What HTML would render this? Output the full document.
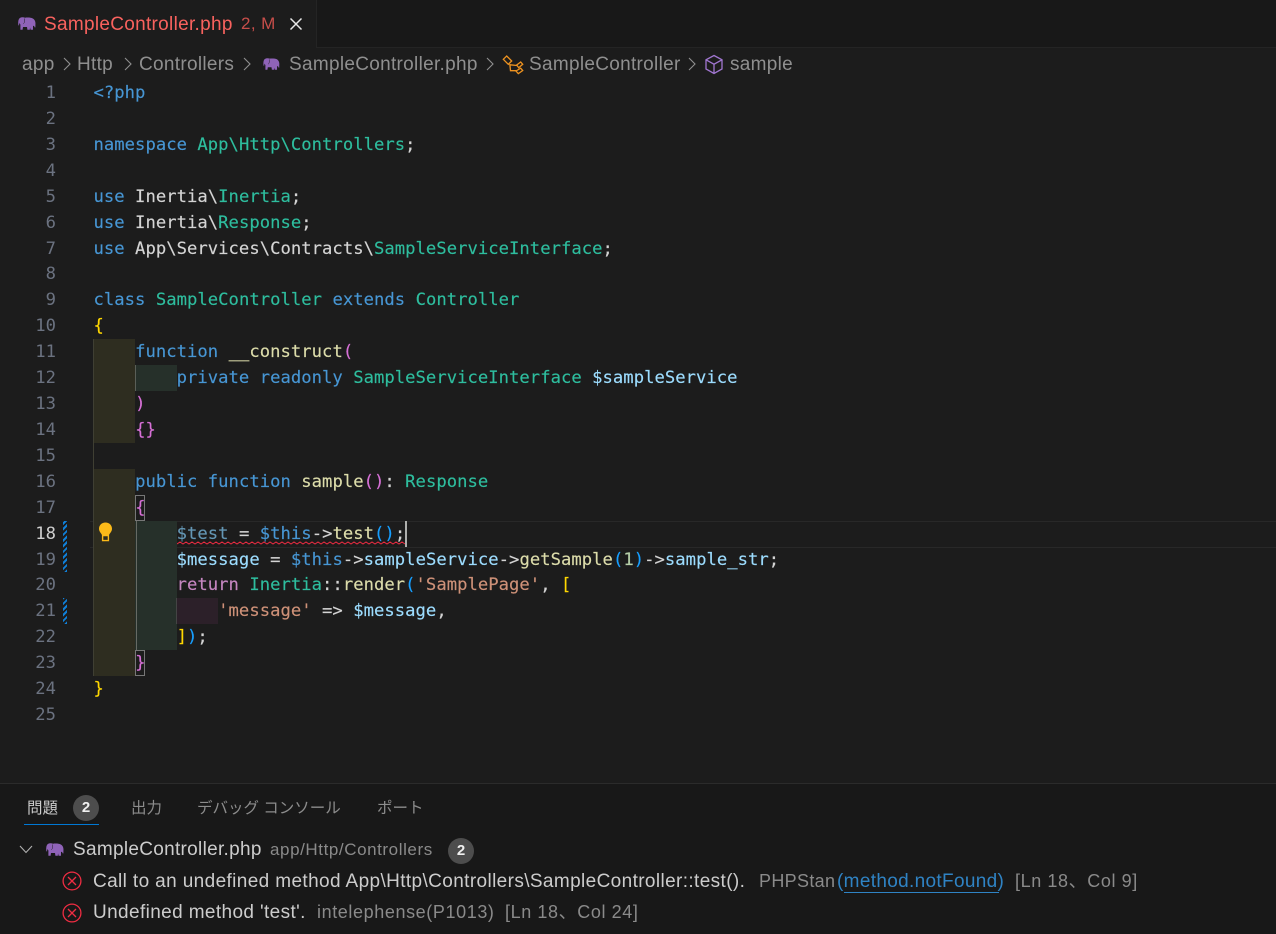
<!DOCTYPE html>
<html><head><meta charset="utf-8">
<style>
html,body{margin:0;padding:0;background:#1c1c1c;}
#r{position:relative;width:1276px;height:934px;overflow:hidden;background:#1c1c1c;font-family:"Liberation Sans","Noto Sans CJK JP",sans-serif;}
.a{position:absolute;}
.t{position:absolute;white-space:pre;line-height:24px;height:24px;}
.s{font-size:19px;letter-spacing:.3px;}
.l{position:absolute;left:93.5px;margin-top:1px;white-space:pre;font-family:"DejaVu Sans Mono",monospace;font-size:17.2px;letter-spacing:.04px;line-height:26px;height:26px;color:#d4d4d4;-webkit-text-stroke:.15px currentColor;}
.n{position:absolute;left:20px;margin-top:1px;width:36px;text-align:right;font-family:"DejaVu Sans Mono",monospace;font-size:17.2px;line-height:26px;color:#6b7280;}
.k{color:#4796d4}.c{color:#2ebd9e}.f{color:#dcdcaa}.v{color:#9cdcfe}.q{color:#ce9178}.p{color:#c586c0}.m{color:#d670d6}.y{color:#ffd700}.b{color:#179fff}
.g{color:#8f8f8f}.w{color:#cccccc}
.j{font-size:15.5px;color:#8c8c8c}
.u{font-size:18px;letter-spacing:.6px;color:#8a8a8a}
</style></head><body>
<div id="r">
<svg width="0" height="0" style="position:absolute"><defs>
<symbol id="e" viewBox="0 0 18 13"><g transform="translate(18,0) scale(-1,1)"><path fill="#8f63b8" d="M0.6 8C0 4 2 1 5.5 0.7C7.5 0.4 9.5 0.5 11 0.7C12.5 0 15 0 16.4 1.2C17.8 2.4 18 5.5 17.6 8.4L16.9 8.4L16.8 5.8C16.5 6.6 16.1 7.2 15.6 7.4L15.6 12.7L13.4 12.7L13 10L9 10L8.6 12.7L6.2 12.7L6 10.4L5.4 12.7L3 12.7L3 8.8C2.2 9 1.5 9.2 1.3 10.4L0.6 10.4Z"/><path fill="none" stroke="#1c1c1c" stroke-width=".5" d="M11.5 1.5C11 3.5 11.3 5.5 12.6 6.8"/></g></symbol>
</defs></svg>

<!-- tab bar -->
<div class="a" style="left:0;top:0;width:1276px;height:48px;background:#181818"></div>
<div class="a" style="left:0;top:0;width:316px;height:48px;background:#1c1c1c"></div>
<div class="a" style="left:316px;top:47px;width:960px;height:1px;background:#242424"></div>
<div class="a" style="left:316px;top:0;width:1px;height:48px;background:#242424"></div>
<svg class="a" style="left:18px;top:17px" width="18" height="13"><use href="#e"/></svg>
<div class="t s" style="left:44px;top:13px;color:#f8625e">SampleController.php</div>
<div class="t" style="left:241px;top:12px;font-size:17px;letter-spacing:.4px;color:#c74e4a">2, M</div>
<svg class="a" style="left:289px;top:17px" width="14" height="14" viewBox="0 0 14 14"><path d="M1.5 1.5L12.5 12.5M12.5 1.5L1.5 12.5" stroke="#e8e8e8" stroke-width="1.5" fill="none"/></svg>

<!-- breadcrumbs -->
<div class="t s g" style="left:22px;top:53px">app</div>
<svg class="a" style="left:63px;top:57px" width="8" height="14" viewBox="0 0 8 14"><path d="M1 1L7 7L1 13" stroke="#8f8f8f" stroke-width="1.1" fill="none"/></svg>
<div class="t s g" style="left:77px;top:53px">Http</div>
<svg class="a" style="left:124px;top:57px" width="8" height="14" viewBox="0 0 8 14"><path d="M1 1L7 7L1 13" stroke="#8f8f8f" stroke-width="1.1" fill="none"/></svg>
<div class="t s g" style="left:139px;top:53px">Controllers</div>
<svg class="a" style="left:243px;top:57px" width="8" height="14" viewBox="0 0 8 14"><path d="M1 1L7 7L1 13" stroke="#8f8f8f" stroke-width="1.1" fill="none"/></svg>
<svg class="a" style="left:263px;top:58px" width="17" height="12"><use href="#e"/></svg>
<div class="t s g" style="left:289px;top:53px">SampleController.php</div>
<svg class="a" style="left:486px;top:57px" width="8" height="14" viewBox="0 0 8 14"><path d="M1 1L7 7L1 13" stroke="#8f8f8f" stroke-width="1.1" fill="none"/></svg>
<svg class="a" style="left:502px;top:54px" width="22" height="21" viewBox="0 0 22 21"><g fill="none" stroke="#ee9320" stroke-width="1.3"><path d="M1.3 5.3L4.7 2L9.7 7L6.3 10.3Z"/><path d="M14.7 11L18.7 8L20.7 10.3L16.7 13.7Z"/><path d="M14 17L18.7 14.2L20.7 16.5L16.3 19.6Z"/><path d="M7.8 10L8.5 16.7H14.2M8.2 10.8L15 11.5"/></g></svg>
<div class="t s g" style="left:529px;top:53px">SampleController</div>
<svg class="a" style="left:688px;top:57px" width="8" height="14" viewBox="0 0 8 14"><path d="M1 1L7 7L1 13" stroke="#8f8f8f" stroke-width="1.1" fill="none"/></svg>
<svg class="a" style="left:704px;top:54px" width="20" height="21" viewBox="0 0 20 21"><path d="M10 1.5L18 5.8V15L10 19.5L2 15V5.8ZM2 5.8L10 10.2L18 5.8M10 10.2V19.5" fill="none" stroke="#a076d0" stroke-width="1.3"/></svg>
<div class="t s g" style="left:730px;top:53px">sample</div>

<!-- line 18 highlight -->
<div class="a" style="left:90px;top:521px;width:1186px;height:25px;border-top:1px solid #282828;border-bottom:1px solid #282828"></div>

<!-- indent blocks -->
<div class="a" style="left:93px;top:339px;width:42px;height:104px;background:#2e2d20"></div>
<div class="a" style="left:93px;top:469px;width:42px;height:207px;background:#2e2d20"></div>
<div class="a" style="left:93px;top:339px;width:1px;height:337px;background:#3f3f33"></div>
<div class="a" style="left:135px;top:365px;width:42px;height:26px;background:#26302a"></div>
<div class="a" style="left:135px;top:521px;width:42px;height:129px;background:#26302a"></div>
<div class="a" style="left:135px;top:365px;width:1px;height:26px;background:#5a5f58"></div>
<div class="a" style="left:136px;top:521px;width:1px;height:129px;background:#666a64"></div>
<div class="a" style="left:177px;top:598px;width:41px;height:26px;background:#2c2029"></div>
<div class="a" style="left:176px;top:598px;width:1px;height:26px;background:#444"></div>
<!-- bracket boxes -->
<div class="a" style="left:135px;top:495px;width:8px;height:24px;border:1px solid #777"></div>
<div class="a" style="left:135px;top:650px;width:8px;height:24px;border:1px solid #777"></div>

<!-- gutter dirty -->
<div class="a" style="left:63px;top:521px;width:4px;height:51px;background:repeating-linear-gradient(-45deg,#0f7fd8 0 2px,#1c1c1c 2px 4px)"></div>
<div class="a" style="left:63px;top:598px;width:4px;height:26px;background:repeating-linear-gradient(-45deg,#0f7fd8 0 2px,#1c1c1c 2px 4px)"></div>

<!-- line numbers -->
<div class="n" style="top:79px">1</div>
<div class="n" style="top:105px">2</div>
<div class="n" style="top:131px">3</div>
<div class="n" style="top:157px">4</div>
<div class="n" style="top:183px">5</div>
<div class="n" style="top:209px">6</div>
<div class="n" style="top:235px">7</div>
<div class="n" style="top:260px">8</div>
<div class="n" style="top:286px">9</div>
<div class="n" style="top:312px">10</div>
<div class="n" style="top:338px">11</div>
<div class="n" style="top:364px">12</div>
<div class="n" style="top:390px">13</div>
<div class="n" style="top:416px">14</div>
<div class="n" style="top:442px">15</div>
<div class="n" style="top:468px">16</div>
<div class="n" style="top:494px">17</div>
<div class="n" style="top:520px;color:#cfcfcf">18</div>
<div class="n" style="top:546px">19</div>
<div class="n" style="top:571px">20</div>
<div class="n" style="top:597px">21</div>
<div class="n" style="top:623px">22</div>
<div class="n" style="top:649px">23</div>
<div class="n" style="top:675px">24</div>
<div class="n" style="top:701px">25</div>

<!-- code -->
<div class="l" style="top:79px"><span class="k">&lt;?php</span></div>
<div class="l" style="top:131px"><span class="k">namespace</span> <span class="c">App\Http\Controllers</span>;</div>
<div class="l" style="top:183px"><span class="k">use</span> Inertia\<span class="c">Inertia</span>;</div>
<div class="l" style="top:209px"><span class="k">use</span> Inertia\<span class="c">Response</span>;</div>
<div class="l" style="top:235px"><span class="k">use</span> App\Services\Contracts\<span class="c">SampleServiceInterface</span>;</div>
<div class="l" style="top:286px"><span class="k">class</span> <span class="c">SampleController</span> <span class="k">extends</span> <span class="c">Controller</span></div>
<div class="l" style="top:312px"><span class="y">{</span></div>
<div class="l" style="top:338px">    <span class="k">function</span> <span class="f">__construct</span><span class="m">(</span></div>
<div class="l" style="top:364px">        <span class="k">private</span> <span class="k">readonly</span> <span class="c">SampleServiceInterface</span> <span class="v">$sampleService</span></div>
<div class="l" style="top:390px">    <span class="m">)</span></div>
<div class="l" style="top:416px">    <span class="m">{}</span></div>
<div class="l" style="top:468px">    <span class="k">public</span> <span class="k">function</span> <span class="f">sample</span><span class="m">()</span>: <span class="c">Response</span></div>
<div class="l" style="top:494px">    <span class="m">{</span></div>
<div class="l" style="top:520px">        <span style="color:#6496b4">$test</span> = <span class="k">$this</span>-&gt;<span class="f">test</span><span class="b">()</span>;</div>
<div class="l" style="top:546px">        <span class="v">$message</span> = <span class="k">$this</span>-&gt;<span class="v">sampleService</span>-&gt;<span class="f">getSample</span><span class="b">(</span><span style="color:#b5cea8">1</span><span class="b">)</span>-&gt;<span class="v">sample_str</span>;</div>
<div class="l" style="top:571px">        <span class="p">return</span> <span class="c">Inertia</span>::<span class="f">render</span><span class="b">(</span><span class="q">'SamplePage'</span>, <span class="y">[</span></div>
<div class="l" style="top:597px">            <span class="q">'message'</span> =&gt; <span class="v">$message</span>,</div>
<div class="l" style="top:623px">        <span class="y">]</span><span class="b">)</span>;</div>
<div class="l" style="top:649px">    <span class="m">}</span></div>
<div class="l" style="top:675px"><span class="y">}</span></div>

<!-- squiggle -->
<svg class="a" style="left:177px;top:541px" width="229" height="4" viewBox="0 0 229 4"><path fill="none" stroke="#ee2c42" stroke-width="1" d="M0 3 L3 1 L6 3 L9 1 L12 3 L15 1 L18 3 L21 1 L24 3 L27 1 L30 3 L33 1 L36 3 L39 1 L42 3 L45 1 L48 3 L51 1 L54 3 L57 1 L60 3 L63 1 L66 3 L69 1 L72 3 L75 1 L78 3 L81 1 L84 3 L87 1 L90 3 L93 1 L96 3 L99 1 L102 3 L105 1 L108 3 L111 1 L114 3 L117 1 L120 3 L123 1 L126 3 L129 1 L132 3 L135 1 L138 3 L141 1 L144 3 L147 1 L150 3 L153 1 L156 3 L159 1 L162 3 L165 1 L168 3 L171 1 L174 3 L177 1 L180 3 L183 1 L186 3 L189 1 L192 3 L195 1 L198 3 L201 1 L204 3 L207 1 L210 3 L213 1 L216 3 L219 1 L222 3 L225 1 L228 3"/></svg>
<!-- cursor -->
<div class="a" style="left:405px;top:521px;width:2px;height:26px;background:#aeafad"></div>
<!-- bulb -->
<svg class="a" style="left:98px;top:522px" width="15" height="20" viewBox="0 0 15 20"><path fill="#fcba19" d="M7.5 0.5C11.2 0.5 14 3.2 14 6.8C14 9.5 12 11 11 13L4 13C3 11 1 9.5 1 6.8C1 3.2 3.8 0.5 7.5 0.5Z"/><path fill="none" stroke="#fcba19" stroke-width="1.4" d="M4.6 13.5H10.4V18.6H4.6Z"/></svg>

<!-- panel -->
<div class="a" style="left:0;top:783px;width:1276px;height:151px;background:#181818;border-top:1px solid #2b2b2b;box-sizing:border-box"></div>
<div class="t j" style="left:27px;top:797px;color:#cccccc">問題</div>
<div class="a" style="left:73px;top:795px;width:26px;height:26px;border-radius:50%;background:#4d4d4d;color:#f0f0f0;font-size:15px;font-weight:bold;line-height:26px;text-align:center">2</div>
<div class="a" style="left:24px;top:824px;width:75px;height:1px;background:#0078d4"></div>
<div class="t j" style="left:131px;top:797px">出力</div>
<div class="t j" style="left:197px;top:797px">デバッグ コンソール</div>
<div class="t j" style="left:377px;top:797px">ポート</div>

<svg class="a" style="left:19px;top:845px" width="14" height="9" viewBox="0 0 14 9"><path d="M1 1L7 7.5L13 1" fill="none" stroke="#b0b0b0" stroke-width="1.1"/></svg>
<svg class="a" style="left:46px;top:843px" width="18" height="13"><use href="#e"/></svg>
<div class="t s w" style="left:73px;top:838px">SampleController.php</div>
<div class="t" style="left:270px;top:838px;font-size:17px;letter-spacing:.58px;color:#8a8a8a">app/Http/Controllers</div>
<div class="a" style="left:448px;top:838px;width:26px;height:26px;border-radius:50%;background:#4d4d4d;color:#f0f0f0;font-size:15px;font-weight:bold;line-height:26px;text-align:center">2</div>

<svg class="a" style="left:62px;top:871px" width="20" height="20" viewBox="0 0 20 20"><circle cx="10" cy="10" r="8.9" fill="none" stroke="#ee2c42" stroke-width="1.3"/><path d="M6 6L14 14M14 6L6 14" stroke="#ee2c42" stroke-width="1.3"/></svg>
<div class="t s w" style="left:93px;top:870px;letter-spacing:.38px">Call to an undefined method App\Http\Controllers\SampleController::test().</div>
<div class="t" style="left:759px;top:869px;font-size:18px;letter-spacing:.33px;color:#8a8a8a">PHPStan</div>
<div class="t" style="left:837px;top:870px;font-size:19px;letter-spacing:.33px;color:#2f83c4">(method.notFound)</div>
<div class="a" style="left:844px;top:892px;width:155px;height:1px;background:#2f83c4"></div>
<div class="t u" style="left:1015px;top:869px">[Ln 18、Col 9]</div>

<svg class="a" style="left:62px;top:903px" width="20" height="20" viewBox="0 0 20 20"><circle cx="10" cy="10" r="8.9" fill="none" stroke="#ee2c42" stroke-width="1.3"/><path d="M6 6L14 14M14 6L6 14" stroke="#ee2c42" stroke-width="1.3"/></svg>
<div class="t s w" style="left:93px;top:901px;letter-spacing:.38px">Undefined method 'test'.</div>
<div class="t u" style="left:317px;top:900px">intelephense(P1013)</div>
<div class="t u" style="left:505px;top:900px">[Ln 18、Col 24]</div>
</div>
</body></html>
